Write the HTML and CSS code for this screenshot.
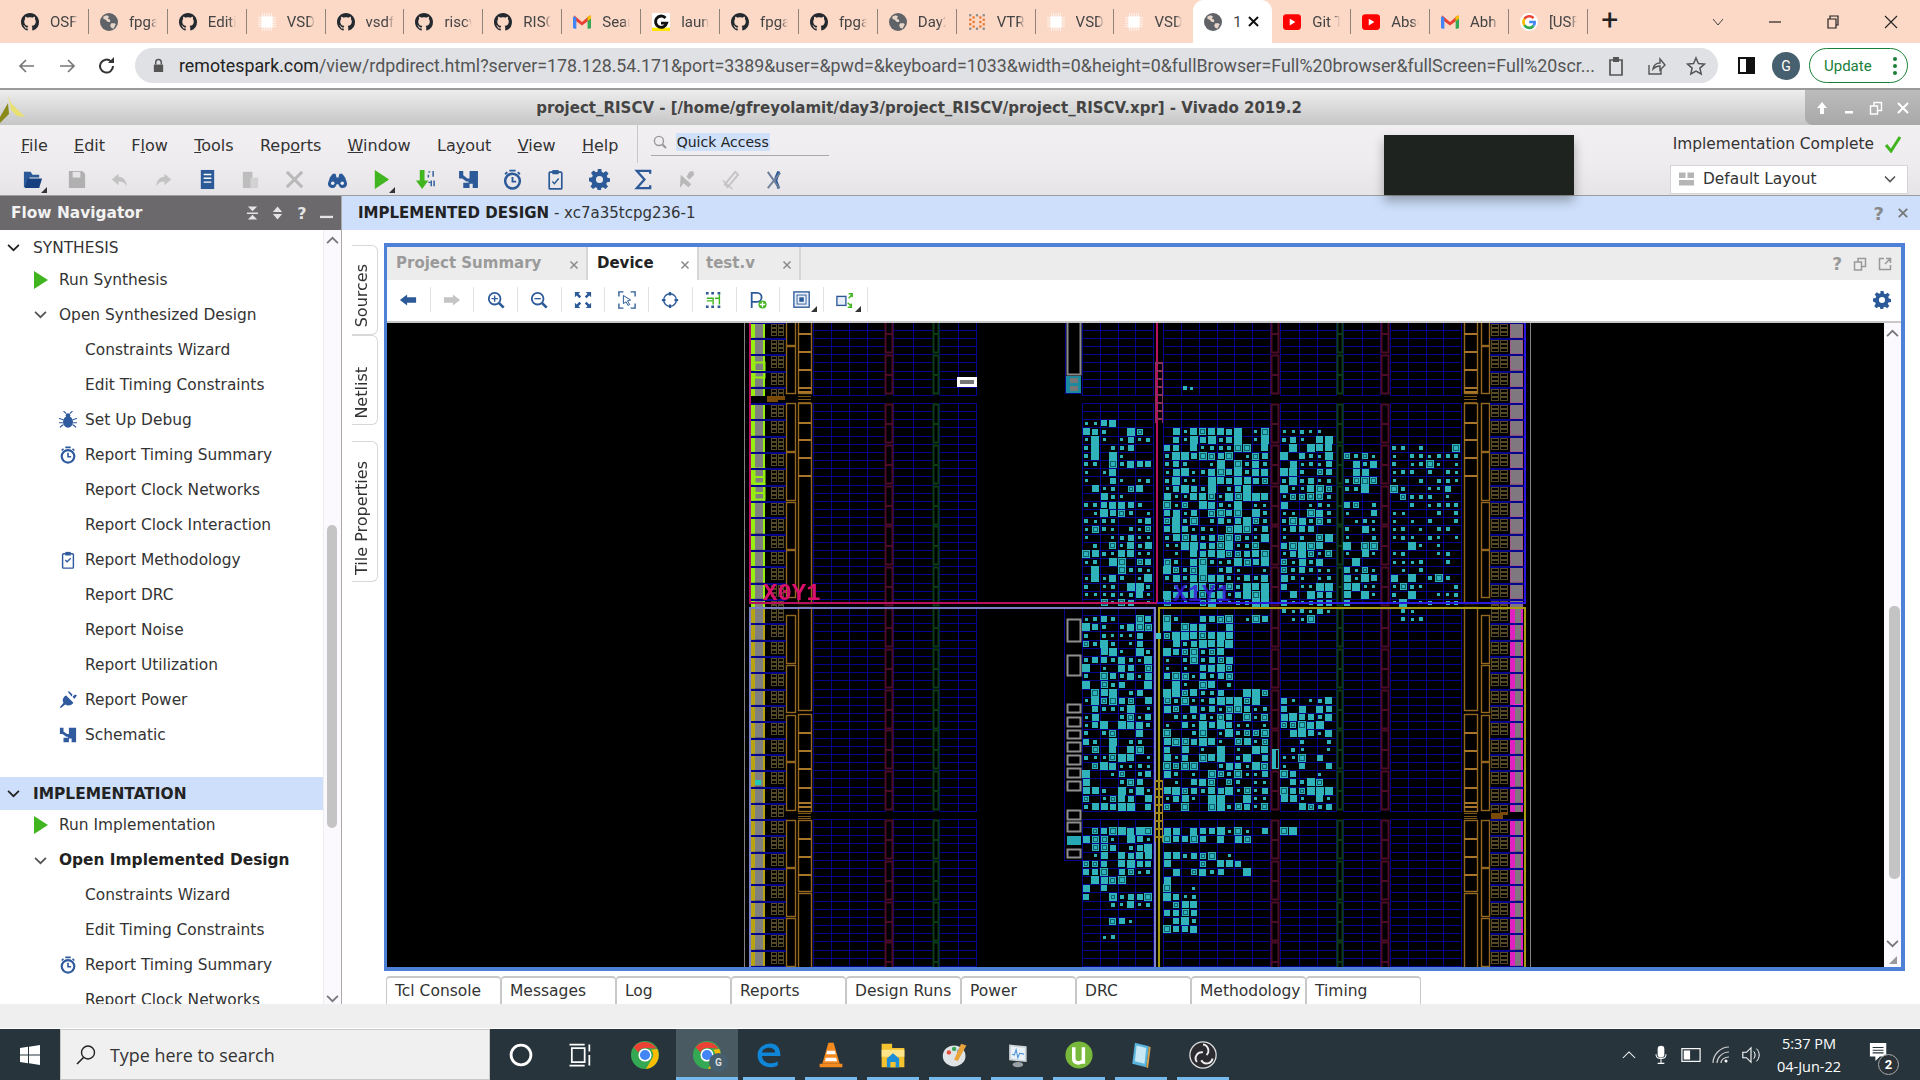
FILE: index.html
```html
<!DOCTYPE html>
<html lang="en">
<head>
<meta charset="utf-8">
<title>project_RISCV - Vivado 2019.2</title>
<link rel="stylesheet" href="styles.css">
</head>
<body>
<svg class="defs" aria-hidden="true">
  <symbol id="gh" viewBox="0 0 16 16"><path fill="#24292f" d="M8 0C3.58 0 0 3.58 0 8c0 3.54 2.29 6.53 5.47 7.59.4.07.55-.17.55-.38 0-.19-.01-.82-.01-1.49-2.01.37-2.53-.49-2.69-.94-.09-.23-.48-.94-.82-1.13-.28-.15-.68-.52-.01-.53.63-.01 1.08.58 1.23.82.72 1.21 1.87.87 2.33.66.07-.52.28-.87.51-1.07-1.78-.2-3.64-.89-3.64-3.95 0-.87.31-1.59.82-2.15-.08-.2-.36-1.02.08-2.12 0 0 .67-.21 2.2.82.64-.18 1.32-.27 2-.27.68 0 1.36.09 2 .27 1.53-1.04 2.2-.82 2.2-.82.44 1.1.16 1.92.08 2.12.51.56.82 1.27.82 2.15 0 3.07-1.87 3.75-3.65 3.95.29.25.54.73.54 1.48 0 1.07-.01 1.93-.01 2.2 0 .21.15.46.55.38A8.013 8.013 0 0016 8c0-4.42-3.58-8-8-8z"/></symbol>
  <symbol id="globe" viewBox="0 0 16 16"><circle cx="8" cy="8" r="8" fill="#5f6368"/><path fill="#e8d5ca" d="M3 3l3-1 2 1-1 2 2 1 0 2-2 0-2-2-2-1zM10 9l3 0 1 1-2 4-2-1-1-2z"/></symbol>
  <symbol id="chip" viewBox="0 0 16 16"><rect x="3" y="3" width="10" height="10" fill="#fff"/><path stroke="#fff" stroke-width=".9" d="M4 0v16M6 0v16M8 0v16M10 0v16M12 0v16M0 4h16M0 6h16M0 8h16M0 10h16M0 12h16" opacity=".65"/></symbol>
  <symbol id="gmail" viewBox="0 0 16 16"><path fill="#ea4335" d="M1 2l7 6 7-6v4l-7 5-7-5z"/><path fill="#4285f4" d="M0 3l3 1v10H1l-1-1z"/><path fill="#34a853" d="M16 3l-3 1v10h2l1-1z"/><path fill="#fbbc04" d="M13 3l3-1v3l-3 2z"/></symbol>
  <symbol id="gsq" viewBox="0 0 16 16"><rect width="16" height="16" fill="#fff"/><rect y="13" width="16" height="3" fill="#ffe600"/><path fill="none" stroke="#111" stroke-width="2.6" d="M12 4.5A5 5 0 1 0 13 9H8"/></symbol>
  <symbol id="yt" viewBox="0 0 16 16"><rect y="1" width="16" height="14" rx="3" fill="#f00"/><path fill="#fff" d="M6 5l5 3-5 3z"/></symbol>
  <symbol id="vtr" viewBox="0 0 16 16"><g fill="#8a8a8a"><rect x="1" y="1" width="2" height="2"/><rect x="1" y="13" width="2" height="2"/><rect x="13" y="1" width="2" height="2"/><rect x="13" y="13" width="2" height="2"/><rect x="7" y="1" width="2" height="2"/><rect x="7" y="13" width="2" height="2"/></g><g fill="#e8762c"><rect x="1" y="5" width="2" height="2"/><rect x="1" y="9" width="2" height="2"/><rect x="4" y="3" width="2" height="2"/><rect x="4" y="7" width="2" height="2"/><rect x="4" y="11" width="2" height="2"/><rect x="10" y="3" width="2" height="2"/><rect x="10" y="7" width="2" height="2"/><rect x="10" y="11" width="2" height="2"/><rect x="13" y="5" width="2" height="2"/><rect x="13" y="9" width="2" height="2"/></g></symbol>
  <symbol id="gcolor" viewBox="0 0 16 16"><circle cx="8" cy="8" r="8" fill="#fff"/><path fill="none" stroke="#ea4335" stroke-width="2.4" d="M12 4.6A5 5 0 0 0 4 5.2"/><path fill="none" stroke="#fbbc04" stroke-width="2.4" d="M4 5.2a5 5 0 0 0 0 5.6"/><path fill="none" stroke="#34a853" stroke-width="2.4" d="M4 10.8a5 5 0 0 0 8.2.4"/><path fill="none" stroke="#4285f4" stroke-width="2.4" d="M12.2 11.2A5 5 0 0 0 13 8H8.2"/></symbol>
  <symbol id="cross" viewBox="0 0 10 10"><path d="M1.5 1.5l7 7M8.5 1.5l-7 7" stroke="currentColor" stroke-width="1.5" fill="none"/></symbol>
  <symbol id="corner" viewBox="0 0 6 6"><path fill="#333" d="M6 0v6H0z"/></symbol>
  <symbol id="play" viewBox="0 0 16 20"><path fill="#41b51f" d="M1 1l14 9-14 9z"/></symbol>
  <symbol id="chev" viewBox="0 0 12 8"><path d="M1 1.5l5 5 5-5" fill="none" stroke="currentColor" stroke-width="1.6"/></symbol>
  <symbol id="gear" viewBox="0 0 20 20"><path fill="currentColor" fill-rule="evenodd" d="M8.3 0h3.4l.5 2.9 1.6.7 2.4-1.7 2.4 2.4-1.7 2.4.7 1.6 2.4.5v3.4l-2.9.5-.7 1.6 1.7 2.4-2.4 2.4-2.4-1.7-1.6.7-.5 2.9H8.3l-.5-2.9-1.6-.7-2.4 1.7-2.4-2.4 1.7-2.4-.7-1.6L0 11.7V8.3l2.9-.5.7-1.6-1.7-2.4 2.4-2.4 2.4 1.7 1.6-.7zM10 6.6a3.4 3.4 0 1 0 0 6.8 3.4 3.4 0 0 0 0-6.8z"/></symbol>
  <symbol id="clock" viewBox="0 0 20 20"><circle cx="10" cy="11.5" r="7" fill="none" stroke="currentColor" stroke-width="2.4"/><path stroke="currentColor" stroke-width="1.8" fill="none" d="M10 7.5v4.5h3.5M7 1.5h6M3 5l2-2M17 5l-2-2"/></symbol>
  <symbol id="clip" viewBox="0 0 20 20"><rect x="4" y="3" width="12" height="16" rx="1" fill="none" stroke="currentColor" stroke-width="1.6"/><rect x="7" y="1" width="6" height="4" fill="currentColor"/><path d="M7 12l2 2 4-5" fill="none" stroke="currentColor" stroke-width="1.4"/></symbol>
  <symbol id="sch" viewBox="0 0 20 20"><path fill="currentColor" d="M1 2h4v4l4 3h2V2h8v16h-5v-4h-3v4H5v-5h5V12H8L4 9H1z"/></symbol>
  <symbol id="bug" viewBox="0 0 20 20"><ellipse cx="10" cy="12" rx="5.5" ry="6.5" fill="currentColor"/><circle cx="10" cy="5" r="2.6" fill="currentColor"/><path stroke="currentColor" stroke-width="1.2" fill="none" d="M0 8l5 2M20 8l-5 2M0 13h5M20 13h-5M1 18l4-3M19 18l-4-3M5 0l3 3M15 0l-3 3"/></symbol>
  <symbol id="method" viewBox="0 0 20 20"><rect x="4" y="3" width="12" height="16" rx="1" fill="none" stroke="currentColor" stroke-width="1.6"/><rect x="7" y="1" width="6" height="4" fill="currentColor"/><path d="M7 10l2 2 4-4" fill="none" stroke="currentColor" stroke-width="1.4"/></symbol>
  <symbol id="plug" viewBox="0 0 20 20"><path fill="currentColor" d="M8 5l8 8c-2 3-6 4-9 2l-5 4-1-1 4-5C3 10 5 6 8 5zM10 1l1-1 4 4-1 2zM15 6l3-2 2 1-3 4z"/></symbol>
  <symbol id="mglass" viewBox="0 0 20 20"><circle cx="8.5" cy="8.5" r="6.5" fill="none" stroke="currentColor" stroke-width="2"/><path stroke="currentColor" stroke-width="3" d="M13.5 13.5l5 5"/></symbol>
</svg>

<header class="tabstrip">
  <div class="ctab"><svg class="ci"><use href="#gh"/></svg><span class="ct">OSFPGA</span></div>
  <div class="ctab"><svg class="ci"><use href="#globe"/></svg><span class="ct">fpga</span></div>
  <div class="ctab"><svg class="ci"><use href="#gh"/></svg><span class="ct">Editing</span></div>
  <div class="ctab"><svg class="ci"><use href="#chip"/></svg><span class="ct">VSD</span></div>
  <div class="ctab"><svg class="ci"><use href="#gh"/></svg><span class="ct">vsdf</span></div>
  <div class="ctab"><svg class="ci"><use href="#gh"/></svg><span class="ct">riscv</span></div>
  <div class="ctab"><svg class="ci"><use href="#gh"/></svg><span class="ct">RISC</span></div>
  <div class="ctab"><svg class="ci"><use href="#gmail"/></svg><span class="ct">Search</span></div>
  <div class="ctab"><svg class="ci"><use href="#gsq"/></svg><span class="ct">laun</span></div>
  <div class="ctab"><svg class="ci"><use href="#gh"/></svg><span class="ct">fpga</span></div>
  <div class="ctab"><svg class="ci"><use href="#gh"/></svg><span class="ct">fpga</span></div>
  <div class="ctab"><svg class="ci"><use href="#globe"/></svg><span class="ct">Day2</span></div>
  <div class="ctab"><svg class="ci"><use href="#vtr"/></svg><span class="ct">VTR</span></div>
  <div class="ctab"><svg class="ci"><use href="#chip"/></svg><span class="ct">VSD</span></div>
  <div class="ctab nosep"><svg class="ci"><use href="#chip"/></svg><span class="ct">VSD</span></div>
  <div class="ctab active"><svg class="ci"><use href="#globe"/></svg><span class="ct">1</span><svg class="cx"><use href="#cross"/></svg></div>
  <div class="ctab"><svg class="ci"><use href="#yt"/></svg><span class="ct">Git T</span></div>
  <div class="ctab"><svg class="ci"><use href="#yt"/></svg><span class="ct">Abso</span></div>
  <div class="ctab"><svg class="ci"><use href="#gmail"/></svg><span class="ct">Abh</span></div>
  <div class="ctab"><svg class="ci"><use href="#gcolor"/></svg><span class="ct">[USF</span></div>
  <div class="newtab">+</div>
  <div class="winctl">
    <svg class="wc-chev" viewBox="0 0 12 8"><path d="M1 1l5 6 5-6" fill="none" stroke="#444" stroke-width="1"/></svg>
    <svg class="wc" viewBox="0 0 14 14"><path d="M1 7h12" stroke="#222" stroke-width="1.2"/></svg>
    <svg class="wc" viewBox="0 0 14 14"><path d="M2 4h8v9H2zM4 4V1h8v9h-2" fill="none" stroke="#222" stroke-width="1.2"/></svg>
    <svg class="wc" viewBox="0 0 14 14"><path d="M1 1l12 12M13 1L1 13" stroke="#222" stroke-width="1.1"/></svg>
  </div>
</header>

<div class="addrbar">
  <svg class="nav-ic" viewBox="0 0 20 20"><path d="M17 10H4M9 4l-6 6 6 6" fill="none" stroke="#777" stroke-width="1.7"/></svg>
  <svg class="nav-ic" viewBox="0 0 20 20"><path d="M3 10h13M11 4l6 6-6 6" fill="none" stroke="#777" stroke-width="1.7"/></svg>
  <svg class="nav-ic" viewBox="0 0 20 20"><path d="M16 10a6.5 6.5 0 1 1-2-4.6" fill="none" stroke="#333" stroke-width="2"/><path fill="#333" d="M11 7h6V1z"/></svg>
  <div class="omni">
    <svg class="lock" viewBox="0 0 14 16"><path fill="#555" d="M2 7h10v8H2z"/><path d="M4 7V4.5a3 3 0 0 1 6 0V7" fill="none" stroke="#555" stroke-width="1.6"/></svg>
    <span class="url"><b>remotespark.com</b>/view/rdpdirect.html?server=178.128.54.171&amp;port=3389&amp;user=&amp;pwd=&amp;keyboard=1033&amp;width=0&amp;height=0&amp;fullBrowser=Full%20browser&amp;fullScreen=Full%20scr...</span>
    <svg class="om-ic first" viewBox="0 0 20 20"><path d="M4 4h12v15H4z" fill="none" stroke="#555" stroke-width="1.7"/><rect x="7" y="1" width="6" height="5" fill="#555"/></svg>
    <svg class="om-ic" viewBox="0 0 20 20"><path d="M3 9v9h12v-5M7 13c1-5 4-6 7-6V3l5 6-5 5v-4c-3 0-5 1-7 3z" fill="none" stroke="#555" stroke-width="1.4"/></svg>
    <svg class="om-ic" viewBox="0 0 20 20"><path d="M10 2l2.4 5.5 6 .6-4.5 4 1.3 5.9L10 15l-5.2 3 1.3-5.9-4.5-4 6-.6z" fill="none" stroke="#555" stroke-width="1.5"/></svg>
  </div>
  <div class="sidepanel"><i></i></div>
  <div class="avatar">G</div>
  <div class="update"><span>Update</span><span class="dots"><i></i><i></i><i></i></span></div>
</div>

<div class="titlebar">
  <svg class="vlogo" viewBox="0 0 26 28"><path fill="#e8e070" d="M8 0l3 8 14 14-8-1-6-6z"/><path fill="#8a8a18" d="M8 8L0 22v6l9-9z"/></svg>
  <span class="vtitle">project_RISCV - [/home/gfreyolamit/day3/project_RISCV/project_RISCV.xpr] - Vivado 2019.2</span>
  <div class="vwin">
    <svg viewBox="0 0 14 14"><path fill="#fff" d="M7 1l5 6H9v6H5V7H2z"/></svg>
    <svg viewBox="0 0 14 14"><rect x="3" y="10" width="8" height="2.5" fill="#fff"/></svg>
    <svg viewBox="0 0 14 14"><path d="M1.5 5h7v8h-7zM5 5V1.5h7.5v8H9" fill="none" stroke="#fff" stroke-width="1.4"/></svg>
    <svg viewBox="0 0 14 14"><path d="M2 2l10 10M12 2L2 12" stroke="#fff" stroke-width="2"/></svg>
  </div>
</div>

<div class="vbars">
  <nav class="menurow">
    <span class="mi"><u>F</u>ile</span><span class="mi"><u>E</u>dit</span><span class="mi">F<u>l</u>ow</span><span class="mi"><u>T</u>ools</span><span class="mi">Rep<u>o</u>rts</span><span class="mi"><u>W</u>indow</span><span class="mi">La<u>y</u>out</span><span class="mi"><u>V</u>iew</span><span class="mi"><u>H</u>elp</span>
    <div class="quick">
      <svg class="qicon"><use href="#mglass"/></svg><span class="qtext">Quick Access</span>
    </div>
    <div class="status"><span>Implementation Complete</span><svg class="okmark" viewBox="0 0 18 18"><path d="M2 10l5 6L16 2" fill="none" stroke="#41b51f" stroke-width="3"/></svg></div>
  </nav>
  <div class="toolrow">
    <div class="tb"><svg viewBox="0 0 22 22"><path fill="#2c5a99" d="M2 3h7l2 3h7v3H8l-3 10H2z"/><path fill="#16407f" d="M6 10h15l-3 10H3z"/></svg><svg class="tri"><use href="#corner"/></svg></div>
    <div class="tb"><svg viewBox="0 0 22 22"><path fill="#b0b0b0" d="M3 2h14l3 3v15H3z"/><rect x="7" y="3" width="8" height="6" fill="#e6e4e6"/></svg></div>
    <div class="tb"><svg viewBox="0 0 22 22"><path fill="#c2c2c2" d="M10 5L3 11l7 6v-4c4 0 6 1 9 5-1-6-4-10-9-10z"/></svg></div>
    <div class="tb"><svg viewBox="0 0 22 22"><path fill="#c2c2c2" d="M12 5l7 6-7 6v-4c-4 0-6 1-9 5 1-6 4-10 9-10z"/></svg></div>
    <div class="tb"><svg viewBox="0 0 22 22"><path fill="#2c5a99" d="M4 1h14v20H4z"/><path fill="#fff" d="M7 5h8v1.500H7zM7 9h8v1.500H7zM7 13h8v1.500H7z"/></svg></div>
    <div class="tb"><svg viewBox="0 0 22 22"><path fill="#bdbdbd" d="M3 3h10v17H3z"/><path fill="#d2d2d2" d="M11 9h8v11h-8z"/></svg></div>
    <div class="tb"><svg viewBox="0 0 22 22"><path d="M3 3l16 16M19 3L3 19" stroke="#b9b9b9" stroke-width="3"/></svg></div>
    <div class="tb"><svg viewBox="0 0 22 22"><path fill="#2c5a99" d="M3 9l3-4h3l1 4h2l1-4h3l3 4 2 6a4.500 4.500 0 0 1-9 1h-2a4.500 4.500 0 0 1-9-1z"/><circle cx="6" cy="15" r="1.800" fill="#f0eef0"/><circle cx="16" cy="15" r="1.800" fill="#f0eef0"/></svg></div>
    <div class="tb"><svg viewBox="0 0 22 22"><path fill="#41b51f" d="M4 1l15 10L4 21z"/></svg><svg class="tri"><use href="#corner"/></svg></div>
    <div class="tb"><svg viewBox="0 0 22 22"><path fill="#41b51f" d="M5 1h5v11h4l-6.500 9L1 12h4z"/><path stroke="#2c5a99" stroke-width="1.500" d="M14 3h2M19 2v6M14 6v3M17 12v6M20 12v6M14 14h2"/></svg></div>
    <div class="tb blue"><svg><use href="#sch"/></svg></div>
    <div class="tb blue"><svg><use href="#clock"/></svg></div>
    <div class="tb blue"><svg><use href="#clip"/></svg></div>
    <div class="tb blue"><svg><use href="#gear"/></svg></div>
    <div class="tb"><svg viewBox="0 0 22 22"><path d="M18 5V2H4l8 9-8 9h14v-3" fill="none" stroke="#2c5a99" stroke-width="2.400"/></svg></div>
    <div class="tb"><svg viewBox="0 0 22 22"><path fill="#b8b8b8" d="M5 6l11 10-3 3-5-4-4 5zM14 3l4-1 1 4-5 5-3-3z"/></svg></div>
    <div class="tb"><svg viewBox="0 0 22 22"><path d="M5 16L16 3l3 3L8 19z" fill="none" stroke="#c4c4c4" stroke-width="2"/><path d="M3 12l10 9" stroke="#c4c4c4" stroke-width="1.500"/></svg></div>
    <div class="tb"><svg viewBox="0 0 22 22"><path fill="#2c5a99" d="M12 9L15 2l3 1-3 9 3 8-3 1z"/><path d="M5 3l12 17M18 4L5 20" stroke="#6d7f99" stroke-width="2"/></svg></div>
    <div class="layoutsel"><svg class="lsicon" viewBox="0 0 16 14"><path fill="#b5b5b5" d="M0 0h7v6H0zM9 0h7v6H9zM0 8h16v6H0z"/></svg><span>Default Layout</span><svg class="lschev"><use href="#chev"/></svg></div>
  </div>
  <div class="blackbox"></div>
</div>

<div class="appbody">
  <aside class="flownav">
    <div class="fn-head">
      <span>Flow Navigator</span>
      <div class="fn-ic">
        <svg viewBox="0 0 14 14"><path fill="#e4e4e4" d="M2 0h10L7 5zM2 14h10L7 9zM1 6.500h12V8H1z"/></svg>
        <svg viewBox="0 0 14 14"><path fill="#e4e4e4" d="M7 0l5 6H2zM7 14l5-6H2z"/></svg>
        <b>?</b>
        <svg viewBox="0 0 14 14"><rect y="10" width="14" height="2.500" fill="#e4e4e4"/></svg>
      </div>
    </div>
    <div class="fn-body">
      <div class="fn-list">
        <div class="row sect"><svg class="slot ch"><use href="#chev"/></svg><span>SYNTHESIS</span></div>
        <div class="row l1"><svg class="slot pl"><use href="#play"/></svg><span>Run Synthesis</span></div>
        <div class="row l1"><svg class="slot ch thin"><use href="#chev"/></svg><span>Open Synthesized Design</span></div>
        <div class="row l2"><i class="slot"></i><span>Constraints Wizard</span></div>
        <div class="row l2"><i class="slot"></i><span>Edit Timing Constraints</span></div>
        <div class="row l2"><svg class="slot ic"><use href="#bug"/></svg><span>Set Up Debug</span></div>
        <div class="row l2"><svg class="slot ic"><use href="#clock"/></svg><span>Report Timing Summary</span></div>
        <div class="row l2"><i class="slot"></i><span>Report Clock Networks</span></div>
        <div class="row l2"><i class="slot"></i><span>Report Clock Interaction</span></div>
        <div class="row l2"><svg class="slot ic"><use href="#method"/></svg><span>Report Methodology</span></div>
        <div class="row l2"><i class="slot"></i><span>Report DRC</span></div>
        <div class="row l2"><i class="slot"></i><span>Report Noise</span></div>
        <div class="row l2"><i class="slot"></i><span>Report Utilization</span></div>
        <div class="row l2"><svg class="slot ic"><use href="#plug"/></svg><span>Report Power</span></div>
        <div class="row l2"><svg class="slot ic"><use href="#sch"/></svg><span>Schematic</span></div>
        <div class="row sect impl"><svg class="slot ch"><use href="#chev"/></svg><b>IMPLEMENTATION</b></div>
        <div class="row l1"><svg class="slot pl"><use href="#play"/></svg><span>Run Implementation</span></div>
        <div class="row l1"><svg class="slot ch thin"><use href="#chev"/></svg><b class="wideb">Open Implemented Design</b></div>
        <div class="row l2"><i class="slot"></i><span>Constraints Wizard</span></div>
        <div class="row l2"><i class="slot"></i><span>Edit Timing Constraints</span></div>
        <div class="row l2"><svg class="slot ic"><use href="#clock"/></svg><span>Report Timing Summary</span></div>
        <div class="row l2"><i class="slot"></i><span>Report Clock Networks</span></div>
      </div>
      <div class="vscroll nav-scroll">
        <svg class="sc-up"><use href="#chev"/></svg>
        <div class="thumb"></div>
        <svg class="sc-dn"><use href="#chev"/></svg>
      </div>
    </div>
  </aside>

  <main class="mainarea">
    <div class="design-head">
      <div><b>IMPLEMENTED DESIGN</b> - xc7a35tcpg236-1</div>
      <div class="dh-ic"><b>?</b><svg viewBox="0 0 10 10"><use href="#cross"/></svg></div>
    </div>
    <div class="work">
      <div class="sidetabs">
        <div class="stab s1"><span>Sources</span></div>
        <div class="stab s2"><span>Netlist</span></div>
        <div class="stab s3"><span>Tile Properties</span></div>
      </div>
      <section class="panel">
        <div class="docstrip">
          <div class="doctab w1"><span>Project Summary</span><svg viewBox="0 0 10 10"><use href="#cross"/></svg></div>
          <div class="doctab w2 on"><span>Device</span><svg viewBox="0 0 10 10"><use href="#cross"/></svg></div>
          <div class="doctab w3"><span>test.v</span><svg viewBox="0 0 10 10"><use href="#cross"/></svg></div>
          <div class="doc-ic">
            <b>?</b>
            <svg viewBox="0 0 14 14"><path d="M1.500 5h7v8h-7zM5 5V1.500h7.500v8H9" fill="none" stroke="#999" stroke-width="1.500"/></svg>
            <svg viewBox="0 0 14 14"><path d="M6 1.500H1.500v11h11V8M8 1.500h4.500V6M12 2L7 7" fill="none" stroke="#999" stroke-width="1.500"/></svg>
          </div>
        </div>
        <div class="devbar">
          <div class="db"><svg viewBox="0 0 20 20"><path fill="#2c5a99" d="M1 10l8-6v3h10v6H9v3z"/></svg></div>
          <div class="db"><svg viewBox="0 0 20 20"><path fill="#c4c4c4" d="M19 10l-8-6v3H1v6h10v3z"/></svg></div>
          <div class="db"><svg viewBox="0 0 20 20"><circle cx="8.500" cy="8.500" r="6.500" fill="none" stroke="#2c5a99" stroke-width="2"/><path stroke="#2c5a99" stroke-width="3" d="M13.500 13.500l5 5"/><path stroke="#2c5a99" stroke-width="1.500" d="M5 8.500h7M8.500 5v7"/></svg></div>
          <div class="db"><svg viewBox="0 0 20 20"><circle cx="8.500" cy="8.500" r="6.500" fill="none" stroke="#2c5a99" stroke-width="2"/><path stroke="#2c5a99" stroke-width="3" d="M13.500 13.500l5 5"/><path stroke="#2c5a99" stroke-width="1.500" d="M5 8.500h7"/></svg></div>
          <div class="db"><svg viewBox="0 0 20 20"><path fill="#2c5a99" d="M1 1h6L5 3l3 3-2 2-3-3-2 2zM19 1v6l-2-2-3 3-2-2 3-3-2-2zM1 19v-6l2 2 3-3 2 2-3 3 2 2zM19 19h-6l2-2-3-3 2-2 3 3 2-2z"/></svg></div>
          <div class="db"><svg viewBox="0 0 20 20"><path d="M1 6V1h5M14 1h5v5M1 14v5h5M14 19h5v-5" fill="none" stroke="#2c5a99" stroke-width="1.500"/><path d="M6 5l8 5-3.500 1 2.500 4-2 1-2-4-3 2z" fill="none" stroke="#2c5a99" stroke-width="1.100"/></svg></div>
          <div class="db"><svg viewBox="0 0 20 20"><circle cx="10" cy="10" r="7" fill="none" stroke="#2c5a99" stroke-width="1.500"/><path stroke="#2c5a99" stroke-width="2.500" d="M10 1v4M10 15v4M1 10h4M15 10h4"/></svg></div>
          <div class="db"><svg viewBox="0 0 20 20"><g fill="#2c5a99"><path d="M1 1h3v3H1zM7 1h3v3H7zM14 1h3v3h-3zM1 16h3v3H1zM7 16h3v3H7zM14 16h3v3h-3z"/></g><path d="M2 8h7v7M8 11h-6M16 4v11M11 8h5" fill="none" stroke="#41b51f" stroke-width="1.600"/></svg></div>
          <div class="db"><svg viewBox="0 0 20 20"><path d="M3 19V2h6a5 5 0 0 1 0 10H3" fill="none" stroke="#2c5a99" stroke-width="2"/><circle cx="15" cy="15" r="4.500" fill="#41b51f"/><path stroke="#fff" stroke-width="1.500" d="M15 12v6M12 15h6"/></svg></div>
          <div class="db"><svg viewBox="0 0 20 20"><rect x="1" y="1" width="17" height="17" fill="#e8eef8" stroke="#2c5a99" stroke-width="1.500"/><rect x="4.500" y="4.500" width="10" height="10" fill="none" stroke="#2c5a99"/><rect x="7" y="7" width="5" height="5" fill="#2c5a99"/></svg><svg class="tri"><use href="#corner"/></svg></div>
          <div class="db"><svg viewBox="0 0 20 20"><rect x="1" y="6" width="10" height="10" fill="#e8eef8" stroke="#2c5a99" stroke-width="1.500"/><path d="M14 8l4-4M14 3h4v4M13 13l4 4M13 18h4v-4" fill="none" stroke="#41b51f" stroke-width="1.600"/></svg><svg class="tri"><use href="#corner"/></svg></div>
          <div class="devgear"><svg viewBox="0 0 20 20"><use href="#gear"/></svg></div>
        </div>
        <div class="devwrap">
          <div class="canvaswrap">
            <canvas id="device" width="1497" height="644"></canvas>
            <span class="clabel x0y1">X0Y1</span>
            <span class="clabel x1y1">X1Y1</span>
          </div>
          <div class="vscroll dev-scroll">
            <svg class="sc-up"><use href="#chev"/></svg>
            <div class="thumb"></div>
            <svg class="sc-dn"><use href="#chev"/></svg>
            <svg class="grip" viewBox="0 0 10 10"><path fill="#999" d="M9 1v8H1z"/></svg>
          </div>
        </div>
      </section>
    </div>
    <div class="bottabs">
      <div class="btab">Tcl Console</div><div class="btab">Messages</div><div class="btab">Log</div><div class="btab">Reports</div><div class="btab">Design Runs</div><div class="btab">Power</div><div class="btab">DRC</div><div class="btab">Methodology</div><div class="btab">Timing</div>
    </div>
  </main>
</div>

<div class="greybar"></div>

<footer class="taskbar">
  <div class="startbtn"><svg viewBox="0 0 20 20"><path fill="#fff" d="M0 3l8-1.200V9.500H0zM9 1.700L20 0v9.500H9zM0 10.500h8v7.700L0 17zM9 10.500h11V20L9 18.300z"/></svg></div>
  <div class="searchbox"><svg viewBox="0 0 22 22"><circle cx="13" cy="8.500" r="6.500" fill="none" stroke="#222" stroke-width="1.400"/><path d="M8.500 13.500L2 20" stroke="#222" stroke-width="1.600"/></svg><span>Type here to search</span></div>
  <div class="tk"><svg viewBox="0 0 24 24"><circle cx="12" cy="12" r="8.500" fill="none" stroke="#fff" stroke-width="2.400"/></svg></div>
  <div class="tk tv"><svg viewBox="0 0 24 24"><path d="M5 6h11v12H5zM3 3h13M3 21h13M20 3v6M20 12v9" fill="none" stroke="#fff" stroke-width="1.500"/></svg></div>
  <div class="tk"><svg viewBox="0 0 32 32"><circle cx="16" cy="16" r="16" fill="#34a853"/><path fill="#ea4335" d="M3 7a16 16 0 0 1 26 1.500L16 8a8 8 0 0 0-7.500 5z"/><path fill="#fbbc04" d="M30 9a16 16 0 0 1-13 23l6.500-11a8 8 0 0 0-.5-11z"/><circle cx="16" cy="16" r="7.500" fill="#fff"/><circle cx="16" cy="16" r="5.800" fill="#4285f4"/></svg></div>
  <div class="tk on run"><svg viewBox="0 0 32 32"><circle cx="16" cy="16" r="16" fill="#34a853"/><path fill="#ea4335" d="M3 7a16 16 0 0 1 26 1.500L16 8a8 8 0 0 0-7.500 5z"/><path fill="#fbbc04" d="M30 9a16 16 0 0 1-13 23l6.500-11a8 8 0 0 0-.5-11z"/><circle cx="16" cy="16" r="7.500" fill="#fff"/><circle cx="16" cy="16" r="5.800" fill="#4285f4"/></svg><span class="tkbadge">G</span></div>
  <div class="tk run"><svg viewBox="0 0 32 32"><path d="M27 17H8c.5 8 11 11 18 6v5c-9 5-23 1-23-12C3 6 15 0 23 4c5 3 6 8 6 13zM8 13h15c0-7-14-7-15 0z" fill="#0f86d8"/></svg></div>
  <div class="tk run"><svg viewBox="0 0 32 32"><path fill="#f58a1f" d="M13 2h6l7 24H6z"/><path fill="#fff" d="M11.500 11h9l1 4h-11zM10 19h12l1 4H9z"/><path fill="#f58a1f" d="M3 26h26v4H3z"/></svg></div>
  <div class="tk run"><svg viewBox="0 0 32 32"><path fill="#f4c430" d="M3 3h12v5h14v22H3z"/><path fill="#ffe58a" d="M3 10h26v8H3z"/><path fill="#1d8fd8" d="M9 20l7-6 7 6v10H9z"/><rect x="13" y="24" width="6" height="6" fill="#f4c430"/></svg></div>
  <div class="tk run"><svg viewBox="0 0 32 32"><ellipse cx="15" cy="17" rx="13" ry="12" fill="#dfe3e6"/><circle cx="9" cy="13" r="2.500" fill="#e64a3a"/><circle cx="15" cy="9" r="2.500" fill="#3aa655"/><circle cx="21" cy="12" r="2.500" fill="#3c78d8"/><path fill="#e8a33a" d="M23 3l6 2-10 18-4-2z"/></svg></div>
  <div class="tk run"><svg viewBox="0 0 32 32"><path fill="#cfd5d8" d="M7 4l20 2v18L7 22z"/><path fill="#e9f2f8" d="M9 6l16 2v14L9 20z"/><path d="M10 15l3 1 2-6 2 9 2-5 5 1" fill="none" stroke="#4a90d9" stroke-width="1.200"/><ellipse cx="17" cy="27" rx="6" ry="3" fill="#9aa0a4"/></svg></div>
  <div class="tk run"><svg viewBox="0 0 32 32"><circle cx="16" cy="16" r="15.500" fill="#78b83a"/><path d="M10 7v13c0 6 7 6 10 3M21 7v19" fill="none" stroke="#fff" stroke-width="4"/></svg></div>
  <div class="tk run"><svg viewBox="0 0 32 32"><path fill="#59b4dc" d="M9 2l16 4-3 24-16-4z"/><path fill="#c8e8f6" d="M11 5l11 3-2 18-11-3z"/><path fill="#d8a24a" d="M25 6l2 1-3 24-2-1z"/></svg></div>
  <div class="tk run"><svg viewBox="0 0 32 32"><circle cx="16" cy="16" r="15" fill="#2c2c30" stroke="#ddd" stroke-width="1.500"/><path fill="none" stroke="#eee" stroke-width="2.200" d="M16 4a7 7 0 0 1 4 12M9 24a7 7 0 0 1 7-11M27 20a7 7 0 0 1-13 2"/></svg></div>
  <div class="tray">
    <svg class="tr-chev" viewBox="0 0 16 10"><path d="M1 9l7-7 7 7" fill="none" stroke="#fff" stroke-width="1.200"/></svg>
    <svg class="tr-ic" viewBox="0 0 16 24"><rect x="4" y="1" width="8" height="14" rx="4" fill="#fff"/><path d="M2 11c0 7 12 7 12 0M8 17v5M4 22h8" fill="none" stroke="#fff" stroke-width="1.300"/></svg>
    <svg class="tr-ic" viewBox="0 0 22 16"><rect x="1" y="1" width="20" height="14" fill="none" stroke="#fff" stroke-width="1.300"/><rect x="3" y="3" width="7" height="10" fill="#fff"/></svg>
    <svg class="tr-ic" viewBox="0 0 20 20"><path d="M2 18C2 10 9 2 18 2M6 18c0-5 5-11 12-11M10 18c0-3 3-6 8-6" fill="none" stroke="#ccc" stroke-width="1.200"/><circle cx="15" cy="16" r="1.500" fill="#fff"/></svg>
    <svg class="tr-ic" viewBox="0 0 22 20"><path d="M2 7h4l5-5v16l-5-5H2z" fill="none" stroke="#fff" stroke-width="1.200"/><path d="M14 6c2 2 2 6 0 8M17 3c4 4 4 10 0 14" fill="none" stroke="#fff" stroke-width="1.100"/></svg>
    <div class="clock"><span>5:37 PM</span><span>04-Jun-22</span></div>
    <div class="notif"><svg viewBox="0 0 22 22"><path fill="#fff" d="M1 1h18v15h-7l-5 5v-5H1z"/><path stroke="#27353c" stroke-width="1.200" d="M4 6h12M4 9h12M4 12h12"/></svg><span class="nbadge">2</span></div>
  </div>
</footer>
<script src="device.js"></script>
</body>
</html>
```

FILE: styles.css
```css
* { box-sizing: border-box; }
html, body { margin: 0; padding: 0; }
body {
  width: 1920px; height: 1080px; overflow: hidden; background: #fff;
  display: flex; flex-direction: column;
  font-family: "DejaVu Sans", sans-serif; font-size: 15.400px; color: #333;
}
.defs { width: 0; height: 0; position: absolute; }

/* chrome tab strip */
.tabstrip { height: 43px; background: #fcd9c7; display: flex; align-items: stretch; padding-left: 10px; font-family: Roboto, sans-serif; flex: none; }
.ctab { width: 78.900px; flex: none; display: flex; align-items: center; padding-left: 10px; position: relative; overflow: hidden; }
.ctab::after { content: ""; position: absolute; right: 0; top: 9px; height: 25px; width: 1px; background: #8f8379; }
.ctab.nosep::after, .ctab.active::after { display: none; }
.ci { width: 20px; height: 18px; flex: none; }
.ct { margin-left: 10px; font-size: 15px; white-space: nowrap; overflow: hidden; width: 28px; color: #444; -webkit-mask-image: linear-gradient(90deg, #000 75%, transparent); mask-image: linear-gradient(90deg, #000 75%, transparent); }
.ctab.active { background: #fff; border-radius: 11px 11px 0 0; }
.ctab.active .ct { width: 14px; -webkit-mask-image: none; mask-image: none; }
.cx { width: 13px; height: 13px; color: #111; }
.newtab { width: 44px; text-align: center; font-size: 30px; line-height: 40px; color: #222; }
.winctl { margin-left: auto; display: flex; align-items: center; padding-right: 22px; }
.wc-chev { width: 12px; height: 8px; margin-right: 0; }
.wc { width: 14px; height: 14px; margin-left: 44px; }

/* address bar */
.addrbar { height: 47px; background: #fff; border-bottom: 2px solid #9a9a9a; display: flex; align-items: center; flex: none; padding-left: 17px; }
.nav-ic { width: 20px; height: 20px; margin-right: 20px; flex: none; }
.omni { width: 1583px; margin-left: -2px; height: 35px; background: #dfe1e5; border-radius: 18px; display: flex; align-items: center; padding-left: 17px; flex: none; }
.lock { width: 13px; height: 15px; flex: none; }
.url { margin-left: 14px; width: 1420px; flex: none; font-family: Roboto, sans-serif; font-size: 17.800px; color: #555; white-space: nowrap; overflow: hidden; }
.url b { font-weight: 400; color: #222; }
.om-ic { width: 20px; height: 20px; margin-left: 20px; flex: none; }
.om-ic.first { margin-left: 7px; }
.sidepanel { width: 17px; height: 17px; border: 2px solid #111; margin-left: 20px; flex: none; display: flex; justify-content: flex-end; }
.sidepanel i { display: block; width: 7px; background: #111; }
.avatar { width: 28px; height: 28px; margin-left: 17px; border-radius: 50%; background: #46606f; color: #fff; font: 14px Roboto, sans-serif; display: flex; align-items: center; justify-content: center; flex: none; }
.update { width: 99px; height: 35px; margin-left: 9px; border: 1px solid #188038; border-radius: 18px; display: flex; align-items: center; justify-content: space-between; padding: 0 10px 0 14px; font: 15px Roboto, sans-serif; color: #188038; flex: none; }
.dots { display: flex; flex-direction: column; gap: 3px; }
.dots i { width: 4px; height: 4px; background: #188038; border-radius: 50%; }

/* vivado title */
.titlebar { height: 35px; flex: none; background: linear-gradient(#ededed, #c6c6c6); display: flex; align-items: center; justify-content: center; position: relative; padding-right: 82px; }
.vlogo { position: absolute; left: 0; top: 5px; width: 26px; height: 28px; }
.vtitle { font-weight: 700; font-size: 15px; color: #444; }
.vwin { position: absolute; right: 0; top: 0; height: 35px; width: 115px; background: linear-gradient(#bcbcbc, #a8a8a8); border-radius: 0 0 0 8px; display: flex; align-items: center; justify-content: space-around; padding: 0 4px; }
.vwin svg { width: 14px; height: 14px; }

/* menu + toolbar */
.vbars { height: 71px; flex: none; background: linear-gradient(#f1eff2, #eeecef 55%, #e6e4e6); position: relative; border-bottom: 1px solid #9c9c9c; }
.menurow { height: 40px; display: flex; align-items: center; padding-left: 21px; }
.mi { margin-right: 26.300px; color: #333; white-space: nowrap; font-size: 16px; }
.quick { width: 178px; height: 27px; margin: -6px 0 0 6px; border-bottom: 1px solid #aaa; position: relative; display: flex; align-items: center; padding-left: 2px; }
.quick::before { content: ""; position: absolute; left: -14px; top: -6px; height: 40px; width: 1px; background: #c8c8c8; }
.qicon { width: 14px; height: 14px; color: #999; flex: none; }
.qtext { margin-left: 9px; background: #cfe0fb; font-size: 14px; padding: 0 1px; line-height: 18px; color: #222; }
.status { margin-left: auto; padding-right: 18px; display: flex; align-items: center; gap: 10px; color: #333; transform: translateY(-1px); }
.okmark { width: 18px; height: 18px; }
.toolrow { height: 30px; display: flex; align-items: center; padding-left: 11px; transform: translateY(-1px); }
.tb { width: 43.600px; height: 30px; flex: none; display: flex; align-items: center; justify-content: center; position: relative; }
.tb svg { width: 21px; height: 21px; }
.tb.blue { color: #2c5a99; }
.tb .tri { position: absolute; width: 6px; height: 6px; right: 8px; bottom: 1px; }
.layoutsel { margin-left: auto; margin-right: 12px; width: 238px; height: 29px; background: #fff; border: 1px solid #d5d5d5; display: flex; align-items: center; padding-left: 8px; }
.lsicon { width: 15px; height: 14px; flex: none; }
.layoutsel span { margin-left: 9px; }
.lschev { width: 12px; height: 8px; margin-left: auto; margin-right: 11px; color: #555; }
.blackbox { position: absolute; left: 1384px; top: 10px; width: 190px; height: 60px; background: #1f2320; box-shadow: 0 6px 10px rgba(60, 60, 60, 0.4); z-index: 3; }

/* app body */
.appbody { height: 808px; flex: none; display: flex; background: #fff; }
.flownav { width: 342px; flex: none; border-right: 1px solid #a9a9a9; display: flex; flex-direction: column; overflow: hidden; }
.fn-head { height: 34px; flex: none; background: #6b696b; color: #f2f2f2; font-weight: 700; display: flex; align-items: center; justify-content: space-between; padding: 0 8px 0 11px; }
.fn-ic { display: flex; align-items: center; gap: 12px; }
.fn-ic svg { width: 13px; height: 14px; }
.fn-ic b { font-size: 16px; color: #e4e4e4; width: 12px; text-align: center; }
.fn-body { flex: 1; min-height: 0; display: flex; }
.fn-list { flex: 1; overflow: hidden; }
.row { height: 35px; display: flex; align-items: center; white-space: nowrap; color: #333; }
.slot { width: 26px; height: 20px; flex: none; display: block; }
.row.sect { padding-left: 7px; margin-bottom: -3px; }
.row.impl { height: 33px; margin-top: 25px; margin-bottom: -2.500px; background: #cddffb; color: #222; }
.row.l1 { padding-left: 33px; }
.row.l2 { padding-left: 59px; }
.row b { color: #222; }
.wideb { letter-spacing: 0; }
svg.slot.ch { width: 13px; height: 9px; margin-right: 13px; color: #222; }
svg.slot.thin { width: 13px; height: 9px; color: #555; margin-left: 1px; margin-right: 12px; }
svg.slot.pl { width: 16px; height: 20px; margin-right: 10px; }
svg.slot.ic { width: 18px; height: 18px; margin-right: 8px; color: #2f5a9e; }
.vscroll { width: 18px; flex: none; background: #fbf8fe; position: relative; color: #777; }
.sc-up, .sc-dn { position: absolute; left: 2px; width: 13px; height: 9px; }
.sc-up { top: 6px; transform: scaleY(-1); }
.nav-scroll { border-left: 1px solid #eee; }
.nav-scroll .sc-dn { top: 764px; }
.thumb { position: absolute; background: #c4c4c4; border-radius: 5px; }
.nav-scroll .thumb { left: 3px; width: 10px; top: 295px; height: 303px; }

/* main area */
.mainarea { flex: 1; min-width: 0; display: flex; flex-direction: column; }
.design-head { height: 34px; flex: none; background: #cddffb; color: #333; display: flex; align-items: center; justify-content: space-between; padding: 0 11px 0 16px; font-size: 15px; }
.design-head b { color: #222; }
.dh-ic { display: flex; align-items: center; gap: 13px; color: #777; }
.dh-ic svg { width: 12px; height: 12px; }
.dh-ic b { color: #888; font-size: 18px; }
.work { height: 741px; flex: none; display: flex; padding: 13px 0 0 10px; }
.sidetabs { width: 26px; flex: none; display: flex; flex-direction: column; margin-top: 2px; }
.stab { border: 1px solid #d8d8d8; border-left: 0; border-radius: 0 6px 6px 0; display: flex; align-items: center; justify-content: center; padding-right: 6px; font-size: 16px; }
.stab span { writing-mode: vertical-rl; transform: rotate(180deg); color: #333; white-space: nowrap; }
.s1 { height: 90px; padding-top: 12px; }
.s2 { height: 90px; padding-top: 26px; }
.s3 { height: 141px; margin-top: 16px; padding-top: 13px; }
.panel { width: 1521px; height: 728px; margin-left: 6px; flex: none; border: 4px solid #4d80d6; border-left-width: 3px; display: flex; flex-direction: column; background: #fff; }
.docstrip { height: 33px; flex: none; background: #ececec; display: flex; align-items: stretch; position: relative; }
.doctab { display: flex; align-items: center; font-weight: 700; font-size: 15px; color: #9a9a9a; border-right: 2px solid #d6d6d6; position: relative; padding-bottom: 2px; }
.doctab.on { background: #fff; color: #222; }
.doctab svg { position: absolute; right: 7px; top: 13px; width: 10px; height: 10px; color: #8a8a8a; }
.w1 { width: 201px; padding-left: 9px; }
.w2 { width: 111px; padding-left: 9px; }
.w3 { width: 102px; padding-left: 7px; }
.doc-ic { margin-left: auto; display: flex; align-items: center; gap: 11px; padding-right: 9px; color: #999; }
.doc-ic svg { width: 14px; height: 14px; }
.doc-ic b { font-size: 17px; color: #999; }
.devbar { height: 43px; flex: none; background: #fff; border-bottom: 2px solid #c8c8c8; display: flex; align-items: center; padding-bottom: 2px; }
.db { width: 43.700px; height: 25px; flex: none; display: flex; align-items: center; justify-content: center; border-right: 1px solid #e2e2e2; position: relative; }
.db svg { width: 18px; height: 18px; }
.db .tri { position: absolute; width: 6px; height: 6px; right: 6px; bottom: 0; }
.devgear { margin-left: auto; padding-right: 10px; color: #2c5a99; display: flex; }
.devgear svg { width: 18px; height: 18px; }
.devwrap { height: 644px; flex: none; display: flex; }
.canvaswrap { width: 1497px; height: 644px; position: relative; background: #000; overflow: hidden; flex: none; }
#device { display: block; width: 1497px; height: 644px; filter: blur(0.5px); }
.clabel { position: absolute; font-family: "Liberation Mono", monospace; font-weight: 700; font-size: 24px; line-height: 24px; filter: blur(0.4px); }
.x0y1 { left: 376px; top: 259px; color: #d8106c; }
.x1y1 { left: 786px; top: 260px; color: #3a18d8; opacity: 0.8; }
.dev-scroll { width: 17px; }
.dev-scroll .thumb { left: 5px; width: 11px; top: 283px; height: 273px; }
.dev-scroll .sc-dn { top: 616px; }
.grip { position: absolute; left: 4px; bottom: 2px; width: 10px; height: 10px; }
.bottabs { height: 28px; flex: none; margin-top: 5px; padding-left: 44px; display: flex; }
.btab { width: 115px; flex: none; border: 1px solid #c8c8c8; border-bottom: 0; border-top-width: 2px; border-radius: 4px 4px 0 0; background: #fff; padding-left: 8px; line-height: 26px; white-space: nowrap; color: #333; font-size: 15.500px; }
.greybar { height: 25px; flex: none; background: #efefef; border-bottom: 1px solid #fff; }

/* taskbar */
.taskbar { height: 51px; flex: none; background: #27343c; display: flex; align-items: stretch; }
.startbtn { width: 60px; flex: none; display: flex; align-items: center; justify-content: center; }
.startbtn svg { width: 20px; height: 20px; }
.searchbox { width: 430px; flex: none; background: #f0f0f0; border: 1px solid #c9c9c9; display: flex; align-items: center; padding-left: 14px; font-family: "Open Sans", sans-serif; font-size: 17.900px; color: #333; }
.searchbox svg { width: 22px; height: 22px; flex: none; }
.searchbox span { margin-left: 13px; }
.tk { width: 62px; flex: none; display: flex; align-items: center; justify-content: center; position: relative; }
.tk svg { width: 28px; height: 28px; }
.tk.tv svg { margin-right: 6px; }
.tk.on { background: #4a5a62; }
.tk.run::after { content: ""; position: absolute; left: 5px; right: 5px; bottom: 0; height: 3px; background: #76b9ed; }
.tk.on::after { left: 0; right: 0; }
.tkbadge { position: absolute; left: 33px; top: 24px; width: 19px; height: 19px; border-radius: 50%; background: #46606f; color: #ddd; font: bold 10px Roboto, sans-serif; display: flex; align-items: center; justify-content: center; }
.tray { margin-left: auto; display: flex; align-items: center; color: #fff; padding-right: 29px; }
.tr-chev { width: 14px; height: 9px; margin-right: 15px; }
.tr-ic { width: 20px; height: 20px; margin-right: 10px; }
.clock { width: 76px; display: flex; flex-direction: column; align-items: center; gap: 4px; font: 14.500px "Open Sans", sans-serif; color: #fff; }
.notif { width: 22px; height: 28px; margin-left: 22px; position: relative; }
.notif svg { width: 20px; height: 22px; }
.nbadge { position: absolute; left: 9px; top: 13px; width: 21px; height: 21px; border-radius: 50%; background: #2a3238; border: 1px solid #aaa; color: #fff; font: bold 13px Roboto, sans-serif; display: flex; align-items: center; justify-content: center; }
```

FILE: device.js
```js
(function () {
  var cv = document.getElementById('device');
  var c = cv.getContext('2d');
  c.translate(-387, -323);

  var TOP = 323, BOT = 967, RH = 8.16, NAVY = '#05058c';
  var segs = [[191, 395], [403, 604], [607, 811], [819, 1023]];

  var seed = 20220604;
  function rnd() {
    seed |= 0; seed = seed + 0x6D2B79F5 | 0;
    var t = Math.imul(seed ^ seed >>> 15, 1 | seed);
    t = t + Math.imul(t ^ t >>> 7, 61 | t) ^ t;
    return ((t ^ t >>> 14) >>> 0) / 4294967296;
  }
  function vl(x, y0, y1, col, w) {
    c.fillStyle = col; c.fillRect(x, Math.max(y0, TOP), w || 1, Math.min(y1, BOT) - Math.max(y0, TOP));
  }
  function hl(x0, x1, y, col, w) {
    if (y < TOP - 2 || y > BOT) return;
    c.fillStyle = col; c.fillRect(x0, Math.round(y), x1 - x0, w || 1);
  }
  function box(x, y, w, h, col, lw) {
    c.strokeStyle = col; c.lineWidth = lw || 1;
    c.strokeRect(Math.round(x) + 0.5, Math.round(y) + 0.5, w, h);
  }

  /* logic grid */
  var groups = [
    [813, 885, 4], [893, 933, 2], [939, 976, 2],
    [1082, 1153, 4], [1163, 1270, 6], [1280, 1336, 3],
    [1343, 1380, 2], [1390, 1461, 4]
  ];
  segs.forEach(function (s) {
    groups.forEach(function (g) {
      var step = (g[1] - g[0]) / g[2];
      for (var i = 0; i <= g[2]; i++) vl(Math.round(g[0] + i * step), s[0], s[1], NAVY);
      for (var y = s[0]; y <= s[1] + 0.1; y += RH) hl(g[0], g[1] + 1, y, NAVY);
    });
  });

  /* block RAM / DSP style columns */
  function blockCol(x, w, col) {
    segs.forEach(function (s) {
      for (var i = 0; i < 5; i++) {
        var y = s[0] + i * 40.8;
        box(x, y + 1, w - 1, 38, col, 2);
        hl(x, x + w, y + 20, col, 2);
      }
    });
  }
  blockCol(885, 8, '#4c0c28');
  blockCol(1271, 8, '#4c0c28');
  blockCol(1381, 8, '#4c0c28');
  blockCol(933, 6, '#0c3c14');
  blockCol(1337, 6, '#0c3c14');

  /* edge columns */
  var ORANGE = '#94681f', RUNG = '#a8752a', BROWN = '#564a26';
  function thinOrange(x, w) {
    [[300, 345], [346, 393], [403, 451], [452, 500], [502, 549], [550, 597], [615, 663], [665, 712], [715, 761], [762, 810], [820, 867], [868, 916], [918, 966]]
      .forEach(function (r) { box(x, r[0], w, r[1] - r[0], ORANGE, 1.4); });
  }
  thinOrange(786, 9);
  thinOrange(1481, 8);

  function ladder(x, w) {
    box(x, 300, w, 93, ORANGE, 1.4);
    [333, 351, 369, 387, 391].forEach(function (y) { hl(x, x + w, y, RUNG, 2); });
    [396, 399, 402].forEach(function (y) { hl(x, x + w, y, '#7b5418', 1); });
    box(x, 403, w, 200, ORANGE, 1.4);
    [422, 439, 457, 475].forEach(function (y) { hl(x, x + w, y, RUNG, 2); });
    box(x, 607, w, 103, ORANGE, 1.4);
    box(x, 714, w, 97, ORANGE, 1.4);
    [732, 750, 768, 787, 802, 806].forEach(function (y) { hl(x, x + w, y, RUNG, 2); });
    [813, 816, 818].forEach(function (y) { hl(x, x + w, y, '#7b5418', 1); });
    box(x, 820, w, 71, ORANGE, 1.4);
    [838, 856, 874].forEach(function (y) { hl(x, x + w, y, RUNG, 2); });
    box(x, 893, w, 90, ORANGE, 1.4);
  }
  ladder(798, 13);
  ladder(1464, 13);

  function brown(x, w) {
    segs.forEach(function (s) {
      for (var y = s[0]; y < s[1] - 4; y += RH * 2) {
        for (var k = 0; k < 2; k++) {
          var bx = x + k * (w + 1);
          box(bx, y + 2, w - 1, 3, BROWN);
          box(bx, y + 6, w - 1, 3, BROWN);
          box(bx, y + 10, w - 1, 3, BROWN);
        }
      }
    });
  }
  brown(771, 6);
  brown(1491, 8);

  /* I/O gutters */
  segs.forEach(function (s, si) {
    var edge = si < 2 ? '#96ee10' : '#b8a412';
    for (var y = s[0]; y < s[1] - 2; y += RH * 2) {
      c.fillStyle = '#808080'; c.fillRect(751, y, 14, RH * 2);
      c.fillStyle = edge; c.fillRect(751, y, 4, RH * 2); c.fillRect(763, y, 2, RH * 2);
    }
  });
  [362, 468, 484].forEach(function (y) {
    box(754, y, 10, 15, '#96ee10', 2);
    hl(754, 765, y + 8, '#96ee10', 2);
  });
  c.fillStyle = '#22c8b8'; c.fillRect(755, 780, 6, 5);

  segs.forEach(function (s, si) {
    for (var y = s[0]; y < s[1] - 2; y += RH * 2) {
      c.fillStyle = '#80787f'; c.fillRect(1510, y, 13, RH * 2);
      if (si >= 2) {
        c.fillStyle = '#e020c0'; c.fillRect(1510, y, 5, RH * 2); c.fillRect(1521, y, 2, RH * 2);
      } else {
        box(1510, y, 12, RH * 2 - 1, '#a8558f');
      }
    }
  });
  hl(1513, 1522, 704, '#f030d0', 2);

  /* navy rules through the edge columns */
  segs.forEach(function (s) {
    for (var y = s[0]; y < s[1] + 1; y += RH * 2) {
      hl(750, 786, y, NAVY, 2);
      hl(1490, 1524, y, NAVY, 2);
    }
  });

  /* clock band bits */
  c.fillStyle = '#000'; c.fillRect(749, 396, 36, 7); c.fillRect(1490, 812, 33, 7);
  c.fillStyle = '#7a4a08';
  c.fillRect(767, 396, 11, 6); c.fillRect(775, 396, 10, 4);
  c.fillRect(1491, 813, 12, 6); c.fillRect(1500, 812, 8, 3);

  /* IOB column */
  box(1067, 300, 13, 74, '#8a8a8a', 2);
  c.fillStyle = '#1a8aa0'; c.fillRect(1066, 376, 15, 17);
  c.fillStyle = '#777'; c.fillRect(1070, 378, 8, 5); c.fillRect(1070, 386, 8, 5);
  vl(1065, 300, 393, NAVY);
  hl(1065, 1083, 393, NAVY);
  vl(1064, 607, 860, NAVY);
  hl(1064, 1082, 860, NAVY);
  [[619, 641], [655, 675], [704, 712], [717, 726], [730, 738], [742, 751], [755, 764], [768, 777], [781, 790], [810, 819], [822, 831], [849, 857]]
    .forEach(function (r) { box(1067, r[0], 13, r[1] - r[0], '#8f8f8f', 2); });
  c.fillStyle = '#26a9b4'; c.fillRect(1067, 836, 14, 9);

  /* white marker */
  c.fillStyle = '#fff'; c.fillRect(957, 377, 20, 10);
  c.fillStyle = '#777'; c.fillRect(960, 380, 14, 4);

  /* placed cells */
  var TEAL = '#2fb2ba';
  var masks = [
    [1082, 1155, 418, 602, 0.72, 0.4],
    [1163, 1268, 420, 604, 0.86, 0.65],
    [1280, 1335, 420, 604, 0.8, 0.55],
    [1343, 1378, 447, 604, 0.75, 0.5],
    [1390, 1458, 443, 604, 0.55, 0.2],
    [1280, 1330, 607, 623, 0.7, 0.4],
    [1390, 1437, 607, 619, 0.5, 0.2],
    [1082, 1155, 608, 810, 0.74, 0.6],
    [1082, 1155, 820, 873, 0.8, 0.7],
    [1082, 1125, 875, 900, 0.55, 0.7],
    [1100, 1155, 885, 910, 0.72, 0.7],
    [1100, 1140, 910, 927, 0.8, 0.8],
    [1100, 1125, 927, 940, 0.85, 0.8],
    [1163, 1237, 608, 688, 0.88, 0.8],
    [1237, 1268, 608, 626, 0.8, 0.6],
    [1163, 1268, 688, 808, 0.82, 0.65],
    [1163, 1268, 820, 845, 0.82, 0.75],
    [1163, 1250, 845, 873, 0.7, 0.7],
    [1163, 1197, 873, 932, 0.75, 0.8],
    [1280, 1332, 694, 810, 0.76, 0.7],
    [1280, 1305, 820, 838, 0.7, 0.5]
  ];
  var colX = [];
  [[1082, 8], [1163, 12], [1280, 6], [1343, 4], [1390, 8]].forEach(function (g) {
    for (var i = 0; i < g[1]; i++) colX.push(g[0] + i * 8.85);
  });
  function drawCell(x, y, big) {
    var r = rnd();
    var s = r < big ? 6 + Math.floor(rnd() * 3) : 3 + Math.floor(rnd() * 2);
    var px = Math.round(x + (8.85 - s) / 2), py = Math.round(y + (8.16 - s) / 2);
    c.fillStyle = TEAL; c.fillRect(px, py, s, s);
    if (s >= 6 && rnd() < 0.3) {
      c.strokeStyle = '#10646e'; c.lineWidth = 1;
      c.strokeRect(px + 1.5, py + 1.5, s - 3, s - 3);
    }
  }
  masks.forEach(function (m) {
    colX.forEach(function (x) {
      if (x < m[0] - 0.5 || x > m[1] - 5) return;
      var base = m[2] >= 800 ? 819 : m[2] >= 607 ? 607 : 403;
      var k = Math.ceil((m[2] - base) / RH);
      for (var y = base + k * RH; y < m[3] - 3; y += RH) {
        if (rnd() < m[4]) drawCell(x, y, m[5]);
      }
    });
  });
  c.fillStyle = TEAL; c.fillRect(1183, 386, 4, 4); c.fillRect(1190, 387, 3, 3);
  box(1272, 749, 6, 19, '#2fb5bd');
  c.fillStyle = '#2fb5bd'; c.fillRect(1273, 750, 3, 18);

  /* region borders */
  var MAG = '#b8105c', LAV = '#7f7fc8', YEL = '#a89a14', BLU = '#2a18e0';
  vl(749, TOP, 602, MAG, 2);
  hl(749, 1157, 602, MAG, 2);
  vl(1156, TOP, 604, MAG, 2);
  hl(1157, 1525, 602, BLU, 2);
  vl(1524, TOP, 604, BLU, 2);
  hl(749, 1155, 607, LAV, 2);
  vl(749, 607, BOT, LAV, 2);
  vl(1154, 607, BOT, LAV, 2);
  hl(1158, 1525, 607, YEL, 2);
  vl(1158, 607, BOT, YEL, 2);
  vl(1524, 607, BOT, YEL, 2);
  vl(744, TOP, BOT, '#808080', 1);
  vl(1530, TOP, BOT, '#808080', 1);

  var i;
  for (i = 0; i < 8; i++) hl(1155, 1163, 362 + i * 8, '#8a2e60', 2);
  vl(1155, 362, 423, '#8a2e60', 1);
  vl(1162, 362, 423, '#8a2e60', 1);
  for (i = 0; i < 8; i++) hl(1155, 1163, 780 + i * 8, '#a8841c', 2);
  vl(1155, 780, 842, '#a8841c', 1);
  vl(1162, 780, 842, '#a8841c', 1);
  c.fillStyle = '#3fc4c8'; c.fillRect(1156, 633, 5, 6);
})();
```
